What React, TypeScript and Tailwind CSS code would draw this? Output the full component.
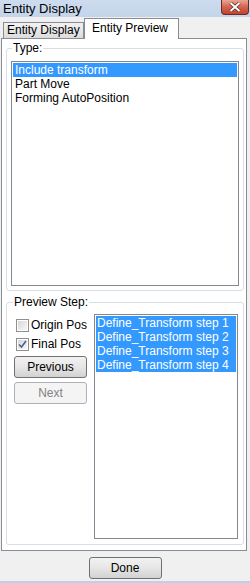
import React from "react";

const typeItems = ["Include transform", "Part Move", "Forming AutoPosition"];
const steps = [
  "Define_Transform step 1",
  "Define_Transform step 2",
  "Define_Transform step 3",
  "Define_Transform step 4",
];

const CheckBox = ({ checked, label }: { checked?: boolean; label: string }) => (
  <div className="flex items-center h-[13px] pl-[2px] whitespace-nowrap">
    <div className="w-[13px] h-[13px] shrink-0 border border-[#8e8f8f] bg-white p-[1px]">
      <div className="w-full h-full bg-gradient-to-br from-[#d8d8d8] to-[#f7f7f7] flex items-center justify-center">
        {checked && (
          <svg width="9" height="9" viewBox="0 0 9 9">
            <path d="M1 4.5 L3.5 7 L8 1" fill="none" stroke="#4a5f97" strokeWidth="1.6" />
          </svg>
        )}
      </div>
    </div>
    <span className="ml-[2px] leading-[13px] text-black">{label}</span>
  </div>
);

const App = () => {
  return (
    <div className="w-[250px] h-[583px] bg-[#f0f0f0] flex flex-col overflow-hidden font-['Liberation_Sans',Arial,sans-serif] text-[12px] text-black whitespace-nowrap">
      {/* title bar */}
      <div className="h-[17px] bg-gradient-to-b from-[#cddcee] to-[#c3d4ea] flex justify-between items-start shrink-0">
        <span className="pl-[3px] pt-[1px] text-[13px] leading-[15px]">Entity Display</span>
        <div className="w-[28px] h-[15px] mr-[1px] rounded-b-[4px] border border-t-0 border-[#6d2a20] bg-gradient-to-b from-[#e9a595] via-[#d3644f] to-[#c0432c] flex items-center justify-center">
          <svg width="12" height="10" viewBox="0 0 12 10">
            <path d="M1.5 1 L10.5 9 M10.5 1 L1.5 9" stroke="#5a2a22" strokeWidth="3.4" />
            <path d="M1.5 1 L10.5 9 M10.5 1 L1.5 9" stroke="#ffffff" strokeWidth="2" />
          </svg>
        </div>
      </div>

      {/* tab control */}
      <div className="w-[246px] ml-[1px] pt-[1px] flex flex-col">
        <div className="h-[20px] flex items-end pl-[2px]">
          <div className="w-[81px] h-[16px] border border-b-0 border-[#898c95] bg-gradient-to-b from-[#f2f2f2] to-[#dcdcdc] pl-[3px] leading-[15px] overflow-hidden">
            Entity Display
          </div>
          <div className="w-[95px] h-[21px] -mb-px relative z-10 border border-b-0 border-[#898c95] bg-white pl-[7px] pt-[2px] leading-[15px]">
            Entity Preview
          </div>
        </div>

        <div className="h-[513px] border border-[#898c95] bg-white pl-[4px] pr-[2px]">
          {/* Type group */}
          <fieldset className="mt-[2px] border border-[#d5dfe5] rounded-[3px] px-[4px] pb-[4px]">
            <legend className="ml-[1px] px-[1px] leading-[14px]">Type:</legend>
            <div className="mt-[6px] h-[225px] border border-[#828790] p-[1px]">
              {typeItems.map((t, i) => (
                <div
                  key={t}
                  className={`h-[14px] leading-[14px] pl-[2px] ${i === 0 ? "bg-[#3399ff] text-white" : ""}`}
                >
                  {t}
                </div>
              ))}
            </div>
          </fieldset>

          {/* Preview Step group */}
          <fieldset className="mt-[4px] border border-[#d5dfe5] rounded-[3px] pl-[7px] pr-[5px] pb-[5px]">
            <legend className="-ml-px px-[1px] leading-[14px]">Preview Step:</legend>
            <div className="mt-[5px] flex gap-[7px]">
              <div className="w-[73px] shrink-0 flex flex-col pt-[5px]">
                <CheckBox label="Origin Pos" />
                <div className="mt-[6px]">
                  <CheckBox checked label="Final Pos" />
                </div>
                <button className="mt-[5px] h-[22px] w-full border border-[#707070] rounded-[3px] bg-gradient-to-b from-[#f2f2f2] via-[#e6e6e6] to-[#d2d2d2] leading-[20px]">
                  Previous
                </button>
                <button className="mt-[4px] h-[22px] w-full border border-[#adb2b5] rounded-[3px] bg-[#f4f4f4] text-[#838383] leading-[20px]">
                  Next
                </button>
              </div>
              <div className="flex-1 h-[225px] border border-[#828790] p-[1px]">
                {steps.map((s) => (
                  <div key={s} className="h-[14px] leading-[14px] pl-[1px] bg-[#3399ff] text-white">
                    {s}
                  </div>
                ))}
              </div>
            </div>
          </fieldset>
        </div>
      </div>

      {/* bottom */}
      <div className="flex-1 flex justify-center pt-[6px]">
        <button className="w-[73px] h-[22px] border border-[#707070] rounded-[3px] bg-gradient-to-b from-[#f2f2f2] via-[#e6e6e6] to-[#d2d2d2] leading-[20px]">
          Done
        </button>
      </div>
      <div className="h-[2px] bg-[#b9d1ea] shrink-0" />
    </div>
  );
};

export default App;
